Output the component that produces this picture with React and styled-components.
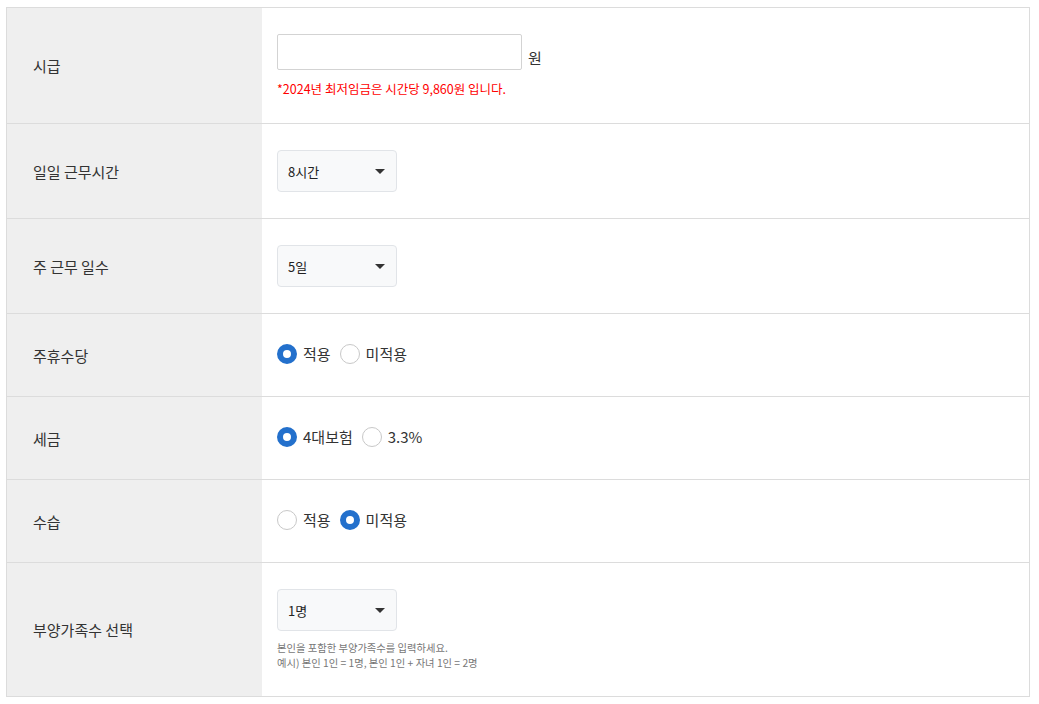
import React, { useState } from "react";
import styled, { createGlobalStyle } from "styled-components";

const GlobalStyle = createGlobalStyle`
  body {
    margin: 0;
    background: #fff;
    font-family: "Noto Sans CJK KR", "Noto Sans", sans-serif;
    color: #333;
  }
`;

const rows = {
  hours: ["4시간", "6시간", "8시간", "10시간"],
  days: ["3일", "4일", "5일", "6일"],
  family: ["1명", "2명", "3명", "4명"],
};

function RadioGroup({ name, options, value, onChange }) {
  return (
    <Radios>
      {options.map((opt) => (
        <RadioLabel key={opt}>
          <RadioInput
            type="radio"
            name={name}
            checked={value === opt}
            onChange={() => onChange(opt)}
          />
          {opt}
        </RadioLabel>
      ))}
    </Radios>
  );
}

export default function App() {
  const [wage, setWage] = useState("");
  const [hours, setHours] = useState("8시간");
  const [days, setDays] = useState("5일");
  const [holiday, setHoliday] = useState("적용");
  const [tax, setTax] = useState("4대보험");
  const [trainee, setTrainee] = useState("미적용");
  const [family, setFamily] = useState("1명");

  return (
    <>
      <GlobalStyle />
      <Wrapper>
        <FormTable>
          <Row>
            <Label>시급</Label>
            <Value $pad="26px 15px 25px">
              <InputLine>
                <WageInput
                  type="text"
                  value={wage}
                  onChange={(e) => setWage(e.target.value)}
                />
                <Unit>원</Unit>
              </InputLine>
              <Notice>*2024년 최저임금은 시간당 9,860원 입니다.</Notice>
            </Value>
          </Row>

          <Row>
            <Label>일일 근무시간</Label>
            <Value $pad="26px 15px">
              <Select value={hours} onChange={(e) => setHours(e.target.value)}>
                {rows.hours.map((h) => (
                  <option key={h}>{h}</option>
                ))}
              </Select>
            </Value>
          </Row>

          <Row>
            <Label>주 근무 일수</Label>
            <Value $pad="26px 15px">
              <Select value={days} onChange={(e) => setDays(e.target.value)}>
                {rows.days.map((d) => (
                  <option key={d}>{d}</option>
                ))}
              </Select>
            </Value>
          </Row>

          <Row>
            <Label>주휴수당</Label>
            <Value $pad="29px 15px 31px">
              <RadioGroup
                name="holiday"
                options={["적용", "미적용"]}
                value={holiday}
                onChange={setHoliday}
              />
            </Value>
          </Row>

          <Row>
            <Label>세금</Label>
            <Value $pad="29px 15px 31px">
              <RadioGroup
                name="tax"
                options={["4대보험", "3.3%"]}
                value={tax}
                onChange={setTax}
              />
            </Value>
          </Row>

          <Row>
            <Label>수습</Label>
            <Value $pad="29px 15px 31px">
              <RadioGroup
                name="trainee"
                options={["적용", "미적용"]}
                value={trainee}
                onChange={setTrainee}
              />
            </Value>
          </Row>

          <Row $last>
            <Label>부양가족수 선택</Label>
            <Value $pad="26px 15px 26px">
              <Select value={family} onChange={(e) => setFamily(e.target.value)}>
                {rows.family.map((f) => (
                  <option key={f}>{f}</option>
                ))}
              </Select>
              <Help>
                본인을 포함한 부양가족수를 입력하세요.
                <br />
                예시) 본인 1인 = 1명, 본인 1인 + 자녀 1인 = 2명
              </Help>
            </Value>
          </Row>
        </FormTable>
      </Wrapper>
    </>
  );
}

const Wrapper = styled.div`
  padding: 7px 9px 7px 6px;
`;

const FormTable = styled.div`
  width: 1024px;
  box-sizing: border-box;
  border: 1px solid #dcdcdc;
`;

const Row = styled.div`
  display: grid;
  grid-template-columns: 255px 1fr;
  border-bottom: ${(p) => (p.$last ? "none" : "1px solid #dcdcdc")};
`;

const Label = styled.div`
  background: #efefef;
  display: flex;
  align-items: center;
  padding-left: 26px;
  font-size: 15px;
  color: #333;
`;

const Value = styled.div`
  padding: ${(p) => p.$pad};
  display: flex;
  flex-direction: column;
  align-items: flex-start;
`;

const InputLine = styled.div`
  display: flex;
  align-items: center;
  gap: 6px;
`;

const WageInput = styled.input`
  width: 245px;
  height: 36px;
  box-sizing: border-box;
  border: 1px solid #d3d3d3;
  border-radius: 2px;
  padding: 0 8px;
  font-size: 14px;
  outline: none;
`;

const Unit = styled.span`
  font-size: 15px;
  color: #333;
  margin-top: 11px;
`;

const Notice = styled.p`
  margin: 10px 0 0;
  font-size: 12.5px;
  line-height: 18px;
  color: #f00;
`;

const Select = styled.select`
  appearance: none;
  width: 120px;
  height: 42px;
  box-sizing: border-box;
  padding: 0 10px;
  font-family: "Noto Sans CJK KR", "Noto Sans", sans-serif;
  font-size: 13px;
  color: #222;
  background-color: #f8f9fa;
  background-image: url("data:image/svg+xml,%3Csvg xmlns='http://www.w3.org/2000/svg' width='10' height='5'%3E%3Cpath d='M0 0h10L5 5z' fill='%23333'/%3E%3C/svg%3E");
  background-repeat: no-repeat;
  background-position: right 11px center;
  border: 1px solid #e1e4e8;
  border-radius: 4px;
  outline: none;
`;

const Radios = styled.div`
  display: flex;
  align-items: center;
  gap: 9px;
`;

const RadioLabel = styled.label`
  display: flex;
  align-items: center;
  gap: 6px;
  font-size: 15px;
  line-height: 22px;
  color: #333;
  cursor: pointer;
`;

const RadioInput = styled.input`
  appearance: none;
  margin: 0;
  width: 20px;
  height: 20px;
  border-radius: 50%;
  border: 1px solid #c8c8c8;
  background: #fff;
  cursor: pointer;

  &:checked {
    border: 6px solid #2370cc;
    background: #fff;
  }
`;

const Help = styled.p`
  margin: 9px 0 0;
  font-size: 10.3px;
  line-height: 15px;
  color: #777;
`;
